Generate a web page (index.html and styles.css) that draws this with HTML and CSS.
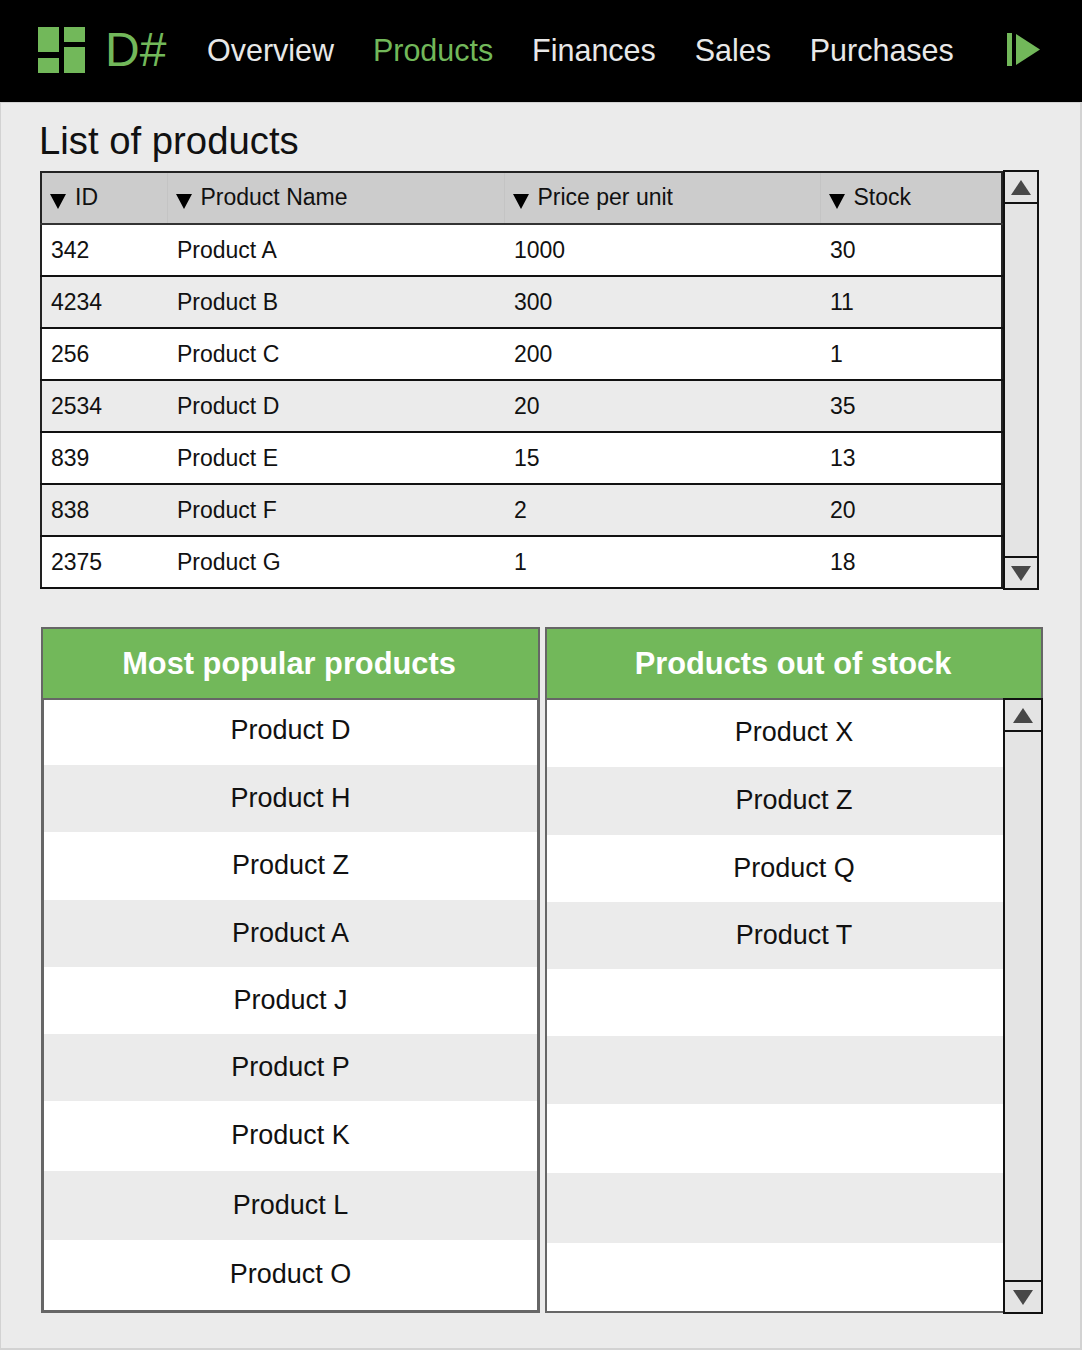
FILE: index.html
```html
<!DOCTYPE html>
<html>
<head>
    <link rel="stylesheet" href="styles.css">
    <title>D# - List of products</title>
</head>
<body>
    <header class="topbar">
        <svg class="logo" width="47" height="46" viewBox="0 0 47 46">
            <rect x="0" y="0" width="21" height="25" fill="#72b85a"/>
            <rect x="0" y="31" width="21" height="15" fill="#72b85a"/>
            <rect x="26" y="0" width="21" height="15" fill="#72b85a"/>
            <rect x="26" y="20" width="21" height="26" fill="#72b85a"/>
        </svg>
        <div class="brand">D#</div>
        <nav class="nav">
            <a>Overview</a>
            <a class="active">Products</a>
            <a>Finances</a>
            <a>Sales</a>
            <a>Purchases</a>
        </nav>
        <svg class="play" width="34" height="33" viewBox="0 0 34 33">
            <rect x="0" y="0" width="5" height="33" fill="#72b85a"/>
            <polygon points="9,1 33,16.5 9,32" fill="#72b85a"/>
        </svg>
    </header>

    <main class="content">
        <h1>List of products</h1>
        <section class="products">
            <table class="product-table">
                <thead>
                    <tr>
                        <th class="col-id"><span class="sort-arrow"></span>ID</th>
                        <th class="col-name"><span class="sort-arrow"></span>Product Name</th>
                        <th class="col-price"><span class="sort-arrow"></span>Price per unit</th>
                        <th><span class="sort-arrow"></span>Stock</th>
                    </tr>
                </thead>
                <tbody>
                    <tr><td>342</td><td>Product A</td><td>1000</td><td>30</td></tr>
                    <tr><td>4234</td><td>Product B</td><td>300</td><td>11</td></tr>
                    <tr><td>256</td><td>Product C</td><td>200</td><td>1</td></tr>
                    <tr><td>2534</td><td>Product D</td><td>20</td><td>35</td></tr>
                    <tr><td>839</td><td>Product E</td><td>15</td><td>13</td></tr>
                    <tr><td>838</td><td>Product F</td><td>2</td><td>20</td></tr>
                    <tr><td>2375</td><td>Product G</td><td>1</td><td>18</td></tr>
                </tbody>
            </table>
            <div class="scrollbar table-scroll">
                <div class="scroll-btn"><span class="arrow-up"></span></div>
                <div class="scroll-track"></div>
                <div class="scroll-btn"><span class="arrow-down"></span></div>
            </div>
        </section>

        <section class="panels">
            <div class="panel panel-left">
                <h2>Most popular products</h2>
                <ul class="list">
                    <li>Product D</li>
                    <li>Product H</li>
                    <li>Product Z</li>
                    <li>Product A</li>
                    <li>Product J</li>
                    <li>Product P</li>
                    <li>Product K</li>
                    <li>Product L</li>
                    <li>Product O</li>
                </ul>
            </div>
            <div class="panel panel-right">
                <h2>Products out of stock</h2>
                <ul class="list">
                    <li>Product X</li>
                    <li>Product Z</li>
                    <li>Product Q</li>
                    <li>Product T</li>
                    <li></li>
                    <li></li>
                    <li></li>
                    <li></li>
                    <li></li>
                </ul>
                <div class="scrollbar panel-scroll">
                    <div class="scroll-btn"><span class="arrow-up"></span></div>
                    <div class="scroll-track"></div>
                    <div class="scroll-btn"><span class="arrow-down"></span></div>
                </div>
            </div>
        </section>
    </main>
</body>
</html>
```

FILE: styles.css
```css
* {
    box-sizing: border-box;
}

body {
    margin: 0;
    font-family: "Liberation Sans", Arial, sans-serif;
    background-color: #ebebeb;
    color: #111111;
}

/* top bar */
.topbar {
    height: 102px;
    background-color: #000000;
    display: flex;
    align-items: center;
    padding-left: 38px;
}

.logo {
    flex: none;
    margin-top: -2px;
}

.brand {
    color: #72b85a;
    font-size: 48px;
    margin-left: 20px;
    margin-top: -4px;
    width: 102px;
}

.nav {
    display: flex;
    gap: 38.8px;
    margin-top: -2px;
}

.nav a {
    color: #e8e8e8;
    font-size: 30.5px;
}

.nav a.active {
    color: #72b85a;
}

.play {
    flex: none;
    margin-left: 53px;
    margin-top: -3px;
}

/* page body */
.content {
    height: 1248px;
    border: solid #d2d2d2;
    border-width: 1px 2px 2px 1px;
    padding: 0 0 0 39px;
}

h1 {
    margin: 0 0 0 -1px;
    height: 68px;
    padding-top: 16px;
    font-size: 38.3px;
    line-height: 44px;
    font-weight: 400;
}

.products {
    display: flex;
    align-items: flex-start;
}

/* product table */
.product-table {
    width: 963px;
    flex: none;
    border-collapse: collapse;
    table-layout: fixed;
    font-size: 23px;
    border: 2px solid #222222;
}

.col-id {
    width: 126px;
}

.col-name {
    width: 337px;
}

.col-price {
    width: 316px;
}

.product-table th {
    height: 52px;
    padding: 0 0 1px 8px;
    background-color: #cccccc;
    font-weight: 400;
    text-align: left;
    border-bottom: 2px solid #333333;
    border-left: 1px solid #c4c4c4;
}

.product-table td {
    height: 52px;
    padding: 0 0 0 10px;
    background-color: #ffffff;
    border-bottom: 2px solid #111111;
}

.product-table td:first-child {
    padding-left: 9px;
}

.product-table tbody tr:nth-child(even) td {
    background-color: #ebebeb;
}

.sort-arrow {
    display: inline-block;
    width: 0;
    height: 0;
    margin-right: 9px;
    vertical-align: -4px;
    border-left: 8px solid transparent;
    border-right: 8px solid transparent;
    border-top: 15px solid #000000;
}

/* scrollbars */
.scrollbar {
    display: flex;
    flex-direction: column;
    flex: none;
    background-color: #e4e4e4;
    border: 2px solid #111111;
}

.table-scroll {
    width: 36px;
    height: 420px;
    margin-top: -1px;
}

.panel-scroll {
    position: absolute;
    top: 69px;
    right: -2px;
    width: 40px;
    height: 616px;
}

.scroll-track {
    flex: 1;
}

.scroll-btn {
    height: 32px;
    display: flex;
    align-items: center;
    justify-content: center;
}

.scroll-btn:first-child {
    border-bottom: 2px solid #111111;
}

.scroll-btn:last-child {
    border-top: 2px solid #111111;
}

.arrow-up,
.arrow-down {
    width: 0;
    height: 0;
    border-left: 10px solid transparent;
    border-right: 10px solid transparent;
}

.arrow-up {
    border-bottom: 15px solid #484848;
}

.arrow-down {
    border-top: 15px solid #484848;
}

/* bottom panels */
.panels {
    display: flex;
    gap: 5px;
    margin-top: 37px;
    margin-left: 1px;
}

.panel {
    display: flex;
    flex-direction: column;
    flex: none;
    height: 686px;
    background-color: #ffffff;
    border: 2px solid #666666;
}

.panel-left {
    width: 499px;
    border-bottom-width: 3px;
}

.panel-right {
    position: relative;
    width: 498px;
}

.panel h2 {
    margin: 0;
    height: 71px;
    flex: none;
    padding-right: 3px;
    background-color: #72b85a;
    color: #ffffff;
    font-size: 30.8px;
    line-height: 69px;
    text-align: center;
    border-bottom: 2px solid #666666;
}

.panel-right h2 {
    padding-right: 2px;
}

.list {
    flex: 1;
    margin: 0;
    padding: 0;
    overflow: hidden;
    list-style: none;
    font-size: 27px;
}

.panel-left .list {
    border: solid #666666;
    border-width: 0 1px;
}

.list li {
    height: 67.3px;
    line-height: 67px;
    text-align: center;
}

.list li:nth-child(even) {
    background-color: #ebebeb;
}

.list li:nth-child(n+7) {
    height: 69.5px;
    line-height: 69px;
}

.panel-left li:first-child {
    height: 65px;
    line-height: 61px;
}

.panel-right li:first-child {
    line-height: 65px;
}
```
